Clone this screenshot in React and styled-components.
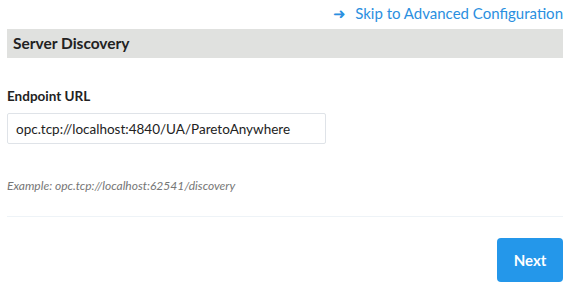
import styled, { createGlobalStyle } from "styled-components";

const GlobalStyle = createGlobalStyle`
  body {
    margin: 0;
    background: #ffffff;
    font-family: Lato, "Liberation Sans", sans-serif;
  }
`;

const Page = styled.div`
  width: 568px;
  height: 286px;
  box-sizing: border-box;
  padding: 0 5px 0 7px;
  display: flex;
  flex-direction: column;
`;

const TopBar = styled.div`
  display: flex;
  justify-content: flex-end;
  height: 29px;
  align-items: center;
`;

const SkipLink = styled.a`
  color: #2b8fe0;
  font-size: 15px;
  text-decoration: none;
  display: flex;
  align-items: center;
  gap: 9px;
  margin-top: -3px;
`;

const SectionHeader = styled.div`
  background: #e0e1df;
  height: 29px;
  display: flex;
  align-items: center;
  padding-left: 6px;
  padding-bottom: 1px;
  box-sizing: border-box;
  font-size: 15.5px;
  font-weight: 700;
  color: #222;
`;

const Field = styled.div`
  display: flex;
  flex-direction: column;
  margin-top: 30px;
`;

const Label = styled.label`
  font-size: 13.5px;
  font-weight: 700;
  color: #222;
  margin-bottom: 9px;
`;

const Input = styled.input`
  width: 319px;
  height: 31px;
  box-sizing: border-box;
  border: 1px solid #dfe3e8;
  border-radius: 2px;
  padding: 0 8px;
  font-family: inherit;
  font-size: 13.5px;
  color: #222;
  outline: none;
`;

const Hint = styled.div`
  margin-top: 34px;
  font-size: 12px;
  font-style: italic;
  color: #767676;
`;

const Divider = styled.hr`
  border: none;
  border-top: 1px solid #eef3f7;
  margin: 23px 0 0;
`;

const Footer = styled.div`
  display: flex;
  justify-content: flex-end;
  margin-top: 21px;
`;

const Button = styled.button`
  width: 66px;
  height: 44px;
  border: none;
  border-radius: 4px;
  background: #2497ea;
  color: #fff;
  font-family: inherit;
  font-size: 15px;
  font-weight: 700;
  cursor: pointer;
`;

export default function App() {
  return (
    <Page>
      <GlobalStyle />
      <TopBar>
        <SkipLink href="#">
          <span>➜</span>
          <span>Skip to Advanced Configuration</span>
        </SkipLink>
      </TopBar>
      <SectionHeader>Server Discovery</SectionHeader>
      <Field>
        <Label>Endpoint URL</Label>
        <Input defaultValue="opc.tcp://localhost:4840/UA/ParetoAnywhere" />
      </Field>
      <Hint>Example: opc.tcp://localhost:62541/discovery</Hint>
      <Divider />
      <Footer>
        <Button>Next</Button>
      </Footer>
    </Page>
  );
}
